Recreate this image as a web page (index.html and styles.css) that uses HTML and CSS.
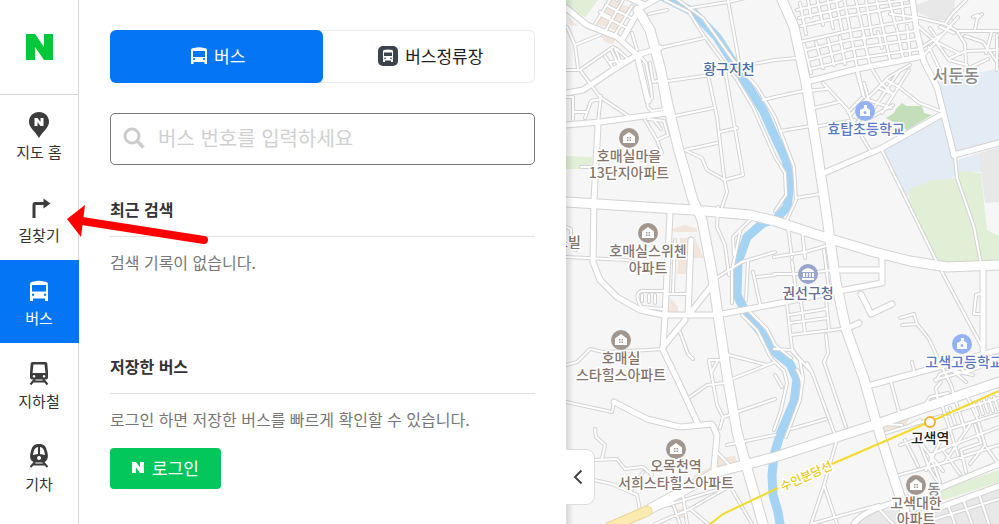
FILE: index.html
```
<!DOCTYPE html>
<html lang="ko">
<head>
    <meta charset="UTF-8">
    <meta name="viewport" content="width=device-width, initial-scale=1.0">
    <title>버스 - 지도</title>
    <link rel="stylesheet" href="styles.css">
</head>
<body>
    <div class="app">
        <nav class="sidebar">
            <a class="logo" href="#" aria-label="N">
                <svg width="27" height="26" viewBox="0 0 27 26"><path fill="#03c83c" d="M0 0h9l9 13V0H27v26h-9l-9-13v13H0z"/></svg>
            </a>
            <a class="nav-item" href="#">
                <svg width="28" height="28" viewBox="0 0 28 28"><path fill="#3c3c3c" d="M14 1C8.200 1 4 5.300 4 10.700c0 6.100 6.300 9.500 10 16.300 3.700-6.800 10-10.200 10-16.300C24 5.300 19.800 1 14 1z"/><path fill="#fff" d="M9.500 7h3l3 4V7h3v8h-3l-3-4v4h-3z"/></svg>
                <span>지도 홈</span>
            </a>
            <a class="nav-item" href="#">
                <svg width="28" height="28" viewBox="0 0 28 28"><path fill="none" stroke="#3c3c3c" stroke-width="3" d="M9 24V11q0-1.500 1.500-1.500H19"/><path fill="#3c3c3c" d="M18.500 4.500l7 5-7 5z"/></svg>
                <span>길찾기</span>
            </a>
            <a class="nav-item active" href="#">
                <svg width="28" height="28" viewBox="0 0 28 28"><path fill="#fff" fill-rule="evenodd" d="M9 4.500Q14 3 19 4.500q4 .200 4 2.500v17h-3v-2.500H8V24H5V7q0-2.300 4-2.500zM7 8v6.500h14V8zM8 16.500a1.200 1.200 0 1 0 .1 0zm12 0a1.200 1.200 0 1 0 .1 0z"/></svg>
                <span>버스</span>
            </a>
            <a class="nav-item" href="#">
                <svg width="28" height="28" viewBox="0 0 28 28"><path fill="#3c3c3c" fill-rule="evenodd" d="M7.500 2h13q1.500 0 1.800 1.500L23 12v5q0 2.500-2.500 2.500h-13Q5 19.500 5 17v-5l.700-8.500Q6 2 7.500 2zM8.500 4.500L7.500 13h13l-1-8.500zM9 15a1.300 1.300 0 1 0 .1 0zm10 0a1.300 1.300 0 1 0 .1 0z"/><path fill="none" stroke="#3c3c3c" stroke-width="2" d="M10 19l-4.500 5.500M18 19l4.500 5.500M8 21.500h12"/></svg>
                <span>지하철</span>
            </a>
            <a class="nav-item" href="#">
                <svg width="28" height="28" viewBox="0 0 28 28"><path fill="#3c3c3c" fill-rule="evenodd" d="M14 1c5 0 7 2.500 8 7 1.500 5 1 8-1 10q-1.500 1.500-4 1.500h-6q-2.500 0-4-1.500c-2-2-2.500-5-1-10 1-4.500 3-7 8-7zM13 4q-3.500.500-4.300 4.500L8 12l5-1zm2 0v7l5 1-.700-3.500Q18.500 4.500 15 4zM14 13a2 2 0 1 0 .1 0z"/><path fill="none" stroke="#3c3c3c" stroke-width="2" d="M10 19l-4.500 5M18 19l4.500 5M8 21.500h12"/></svg>
                <span>기차</span>
            </a>
        </nav>

        <main class="panel">
            <div class="tabs">
                <button class="tab active" type="button">
                    <svg width="16" height="18" viewBox="0 0 16 18"><path fill="#fff" fill-rule="evenodd" d="M3 1q5-1.500 10 0 3 0 3 2v14h-2.500v-2h-11v2H0V3q0-2 3-2zM2 4v6h12V4zm1 7a1 1 0 1 0 .1 0zm10 0a1 1 0 1 0 .1 0z"/></svg>
                    버스
                </button>
                <button class="tab" type="button">
                    <svg width="20" height="20" viewBox="0 0 20 20"><rect width="20" height="20" rx="5" fill="#3b434c"/><path fill="#fff" fill-rule="evenodd" d="M6 4q4-1 8 0 1 .300 1 1.500V16h-2v-1.500H7V16H5V5.500Q5 4.300 6 4zM6 6.500V10h8V6.500zM7 11.500a.8.800 0 1 0 .1 0zm6 0a.8.800 0 1 0 .1 0z"/></svg>
                    버스정류장
                </button>
            </div>

            <form class="search">
                <label for="busSearch" aria-label="버스 번호">
                    <svg width="22" height="22" viewBox="0 0 22 22"><circle cx="9" cy="9" r="7" fill="none" stroke="#ccc" stroke-width="3"/><path stroke="#ccc" stroke-width="3.500" d="M13.500 13.500l7 7"/></svg>
                </label>
                <input id="busSearch" type="text" placeholder="버스 번호를 입력하세요">
            </form>

            <section class="section">
                <h2>최근 검색</h2>
                <p>검색 기록이 없습니다.</p>
            </section>
            <section class="section">
                <h2>저장한 버스</h2>
                <p>로그인 하면 저장한 버스를 빠르게 확인할 수 있습니다.</p>
                <button class="login" type="button">
                    <svg width="12" height="11" viewBox="0 0 12 11"><path fill="#fff" d="M0 0h4l4 5.500V0h4v11H8L4 5.500V11H0z"/></svg>
                    로그인
                </button>
            </section>
        </main>

        <div class="map">
            <svg class="map-canvas" viewBox="566 0 433 524" preserveAspectRatio="xMinYMin slice">
                <defs>
                    <g id="wide">
                        <path d="M638 10L650 30 660 67 668 105 678 147 693 200 702 220 712 272 718 315 727 375 737 432 750 479 763 524"/>
                        <path d="M566 202L693 210 750 215 775 221 824 237 874 252 910 261 947 267 999 265"/>
                        <path d="M780 -5L794 27 806 83 817 150 827 217 831 247 836 282 846 329 864 379 877 425 891 469 904 509 907 524"/>
                        <path d="M650 509L717 472 775 457 874 425 941 402 999 382"/>
                    </g>
                    <g id="middle">
                        <path d="M806 82L857 69 919 57"/>
                        <path d="M912 -3L917 33 924 62 937 87 947 127 954 155"/>
                        <path d="M954 155L999 143"/>
                        <path d="M824 173L882 148 941 115"/>
                        <path d="M566 93L583 90 613 70 637 55 660 48"/>
                        <path d="M566 8L587 25 617 37 637 55 648 101"/>
                        <path d="M623 38L640 8 658 -2M625 -4L645 5"/>
                        <path d="M566 125L600 122 667 113"/>
                        <path d="M598 125L594 200 593 262 600 280 617 297 640 310 663 315 717 315 775 304 834 292 882 283 882 255"/>
                        <path d="M670 213L665 315 663 350 680 385 697 422"/>
                        <path d="M691 240L688 315"/>
                        <path d="M685 320L663 347M713 284L691 312"/>
                        <path d="M614 402L647 419 680 427 712 424 717 435 714 468"/>
                        <path d="M840 270L881 270M861 294L871 314 892 304M846 329L859 323"/>
                        <path d="M871 385L957 362 999 350"/>
                        <path d="M983 268L983 350"/>
                        <path d="M933 491L999 464M919 515L999 486M854 524Q858 517 875 509L907 498"/>
                    </g>
                    <g id="thin">
                        <path d="M844 -2L857 67 864 97"/>
                        <path d="M882 150L937 262M955 157L957 178 974 227 981 264"/>
                        <path d="M660 48L704 38M690 8L728 2 750 -3M728 0L741 73M753 64L775 60 797 58M763 100L775 97 808 90"/>
                        <path d="M668 81L711 75M675 116L713 108M708 75L717 117 724 177 727 192 722 207"/>
                        <path d="M725 70L733 117 743 175 725 180 707 170 702 158 685 150 717 143M720 132L737 128"/>
                        <path d="M665 0L689 12 704 36 737 80 753 107 775 157 785 173 786 195 775 211"/>
                        <path d="M674 -3L703 18 733 60 757 87 775 117 794 167 796 200 787 220M796 198L820 194"/>
                        <path d="M718 207L717 227 725 245 729 275M753 217L733 237 734 255"/>
                        <path d="M567 27L575 45 578 68M566 70L580 70 613 47M575 45L600 35M580 70L600 97 630 117M601 96L598 122M566 97H573V120M573 112H587M585 118L591 101 601 99"/>
                        <path d="M632 33L637 50M611 49L619 66M617 49L629 60M605 56L613 68M622 66L615 48M629 60L610 62"/>
                        <path d="M601 15L625 27M595 24L611 -2M606 30L623 0M616 33L632 6M606 5L631 18M600 12L610 17M617 0L622 -3"/>
                        <path d="M640 56L646 63 651 88 652 98Q643 105 652 111L664 109M650 63L653 82 661 80M659 80L664 110"/>
                        <path d="M645 120L657 140 662 153Q650 162 641 160M648 119L664 121 668 135 657 140M654 120L661 129M649 14L667 10"/>
                        <path d="M581 167H593M566 257L627 260 645 266M566 227L571 229V248L576 250"/>
                        <path d="M665 291H642Q636 292 638 300L641 307 663 309M642 295V301M649 295V302M655 295V303M665 294H690M675 240L673 292"/>
                        <path d="M680 332L688 354 693 359M713 280L742 262 775 252M725 354L767 365M732 379L775 362M737 412L775 399M727 445L775 435"/>
                        <path d="M720 360H709L717 405 723 417 720 428M709 362L713 382M718 360L711 373M723 417L735 413M690 397L707 385 724 383"/>
                        <path d="M717 452L733 469M753 272L760 304M757 277L775 275M750 312L767 329 775 345 791 358"/>
                        <path d="M742 315L757 330 771 358 784 371 787 383 781 410 774 430M775 375L782 387"/>
                        <path d="M740 232L732 270 732 303M748 262L746 300"/>
                        <path d="M566 402L612 412 614 402M566 365L577 362 590 349 603 352 648 350 663 349"/>
                        <path d="M595 429L596 437 605 445 602 459M594 460L617 459 625 469 643 467 652 475M594 480L612 484 637 495 641 515M643 472L630 492"/>
                        <path d="M683 495L687 524M652 510L710 492 730 486M655 524L690 509 708 524M672 501L680 524M690 509L730 486 752 524"/>
                        <path d="M787 305L791 340 792 349M801 302L805 333M826 299L829 329M791 335L841 329M789 315L826 309M790 323L828 318"/>
                        <path d="M774 274H797L834 270M792 262L796 290M824 250L829 290M774 257L805 252 826 246M787 220L792 258M802 228L805 258"/>
                        <path d="M774 349L791 350 812 372 834 432M826 335L828 353 824 362 846 427M791 429L826 419M812 372L807 363"/>
                        <path d="M792 349L800 360 803 378 800 400 786 437M797 370Q804 380 801 392"/>
                        <path d="M891 382L899 412M912 362L914 371M902 325L917 324 929 339 941 365M900 318L914 314 917 324"/>
                        <path d="M942 272L967 319 981 345M980 294L976 295 974 314H983"/>
                        <path d="M837 439L824 485 811 524M824 485L837 524M811 524L879 505"/>
                        <path d="M823 83L848 110 853 122 871 152M810 109L839 102M808 91L826 89M814 127L855 120M780 131L811 126"/>
                        <path d="M848 112L862 98M857 73L863 95M871 67L880 82 892 93M850 115L873 93 889 77 910 65M858 122L866 109M870 118L893 105M882 113L909 70M874 108L900 70M866 99L891 108M879 88L892 94M886 80L899 87 919 103 943 112M868 97L864 83"/>
                        <path d="M797 10L840 0M799 18L845 8 907 0M801 26L847 16 912 5M800 42L848 31 913 20M806 50L849 40 915 31M808 60L851 49 917 39M810 69L853 59 920 49"/>
                        <path d="M800 3L806 34M808 0L811 17M817 -2L823 25M827 -4L833 28M836 0L842 30M804 44L811 73M816 42L823 68M828 39L834 65M840 37L845 64"/>
                        <path d="M856 0L865 40M866 0L872 36M876 -2L890 60M889 0L896 27M901 -2L904 20M863 36L870 65M878 32L882 48M897 29L903 58M907 26L910 55"/>
                        <path d="M890 14L920 18 945 24 957 31H999M968 -2L952 14 945 24M958 17L936 42 924 55M919 27L936 42 949 60 967 65M919 49L942 34M930 28L938 40M957 31L965 44 966 64M965 36L983 42 997 62M992 31L986 53M975 29L978 15 973 17M978 18L982 14M950 58L966 51 999 50M954 33L940 27M936 42L960 54M929 47L940 70M997 35V70M965 70L988 59"/>
                        <path d="M941 365L951 385 957 405 965 430M955 360L965 373 983 366M936 381L940 374 965 367M941 382L936 388 938 402M948 366L966 382M954 371L973 375M935 380L970 370"/>
                        <path d="M925 405L930 397 948 393M941 402L950 430 958 455M968 398L978 420 985 445 999 465M886 433L925 421 999 398M905 440L918 466M916 434L930 470 940 485M900 445L940 432 999 414M940 450L999 427M899 475L940 464 999 445M918 440L943 471M942 438L926 470M945 462L970 425M960 474L943 450M966 472L961 450 981 443 975 425M940 482L930 455 955 444M985 445L970 464"/>
                        <path d="M950 408L955 424M974 404L978 415M979 402L983 414M984 400L988 412M989 399L993 411M994 397L998 409M883 424L902 425M907 427L920 420"/>
                        <path d="M948 505L955 524M963 499L972 524M979 494L989 524M935 519L999 499M880 510L893 524"/>
                    </g>
                    <g id="house">
                        <circle r="10" fill="#a2978e"/>
                        <path fill="#fff" d="M0-6l6 4.500V5H-6v-6.500z"/>
                        <path fill="#a2978e" d="M-2-1h1.500v1.500H-2zm2.500 0H2v1.500H.500zM-2 1.500h1.500V3H-2zm2.500 0H2V3H.500z"/>
                    </g>
                    <g id="school">
                        <circle r="10" fill="#94b1f5"/>
                        <path fill="#fff" d="M-1-6h3v3l3 2v6H-5v-6l4-2z"/>
                        <circle cy="1.500" r="1.500" fill="#94b1f5"/>
                    </g>
                </defs>

                <!-- land use -->
                <path class="park" d="M566 -1H599L585 17 566 8zM566 156L592 157V163L580 169H566z"/>
                <path class="campus" d="M937 83L974 74 999 68V143L954 153zM882 150L941 118 957 160 999 147V172H965L907 197z"/>
                <path class="park" d="M909 200V189L934 180 956 178 959 171 981 173 984 203 987 230 999 236V262H937zM941 490L999 470V482L941 501zM955 262H970V264z"/>
                <path class="wood" d="M886 118L894 113 896 109 902 103 906 106 922 106 924 113 932 115 907 130 897 124z"/>
                <path class="block" d="M979 153L999 148V202L985 203zM915 5L933 -1H955L953 20H935L917 12zM925 510L999 484V524H856Q860 514 880 510z"/>
                <path class="built" d="M601 15L611 -1 622 3 606 27 595 24zM618 3L633 8 618 32 609 28zM600 35L617 37 613 44 605 42zM568 17L578 26 571 25zM672 229L685 225 697 229 697 232H674zM680 238H690L686 274H677zM695 239L704 258H693zM670 298L678 307V312H669zM716 458L735 456 738 465 717 470zM694 475L716 465V473L693 484zM675 509H685V518H678zM883 425L902 413 913 413 904 428 884 433z"/>

                <path class="river" d="M660 -5L693 12 717 37 740 73 763 110 775 137 786 160 790 183 787 207 776 219 763 223 747 237 738 262 737 295 747 315 763 335 775 352 790 364 797 379 794 402 781 432 774 455 772 475 773 495 778 512 781 530"/>

                <!-- every road is drawn twice, grey edge below and white on top -->
                <use href="#thin" class="road thin edge"/>
                <use href="#middle" class="road middle edge"/>
                <use href="#wide" class="road wide edge"/>
                <use href="#thin" class="road thin"/>
                <use href="#middle" class="road middle"/>
                <use href="#wide" class="road wide"/>

                <path class="highway edge" d="M610 527L647 511"/>
                <path class="highway" d="M610 527L647 511"/>
                <path class="rail" d="M705 528L723 514 778 488M832 464L927 423 999 391"/>
                <circle class="station" cx="930" cy="422" r="5"/>

                <use href="#house" x="629" y="138"/>
                <use href="#house" x="648" y="233"/>
                <use href="#house" x="621" y="340"/>
                <use href="#house" x="676" y="449"/>
                <use href="#school" x="865" y="111"/>
                <use href="#school" x="962" y="344"/>
                <circle cx="808" cy="274" r="10" fill="#98a5cc"/>
                <path fill="#fff" d="M802 271q6-6 12 0v1h-12zM803 273h2v4h-2zm3.300 0h1.500v4h-1.500zm3 0h1.500v4h-1.500zm2.700 0h2v4h-2zM802 278h12v2h-12z"/>

                <g class="label">
                    <text x="729" y="74" class="water">황구지천</text>
                    <text x="956" y="82" class="district">서둔동</text>
                    <text x="934" y="494" class="district small">동</text>
                    <use href="#house" x="916" y="485"/>
                    <text x="866" y="134" class="edu">효탑초등학교</text>
                    <text x="964" y="367" class="edu">고색고등학교</text>
                    <text x="629" y="161">호매실마을</text>
                    <text x="629" y="178">13단지아파트</text>
                    <text x="568" y="247">스빌</text>
                    <text x="648" y="256">호매실스위첸</text>
                    <text x="648" y="273">아파트</text>
                    <text x="621" y="363">호매실</text>
                    <text x="621" y="380">스타힐스아파트</text>
                    <text x="676" y="471">오목천역</text>
                    <text x="676" y="488">서희스타힐스아파트</text>
                    <text x="916" y="508">고색대한</text>
                    <text x="916" y="524">아파트</text>
                    <text x="808" y="298" class="office">권선구청</text>
                    <text x="930" y="443" class="stop">고색역</text>
                    <text class="line" transform="translate(808 480) rotate(-24)">수인분당선</text>
                </g>
            </svg>
            <button class="fold" type="button" aria-label="패널 접기">
                <svg width="10" height="16" viewBox="0 0 10 16"><path fill="none" stroke="#444" stroke-width="2" d="M8.500 1.500L2 8l6.500 6.500"/></svg>
            </button>
        </div>

        <svg class="pointer" width="144" height="42" viewBox="0 0 144 42"><path fill="#f00" d="M1 16L19 2 15 34z"/><path stroke="#f00" stroke-width="8" stroke-linecap="round" d="M16 18L138 37"/></svg>
    </div>
</body>
</html>
```

FILE: styles.css
```
* { margin: 0; padding: 0; box-sizing: border-box; }

body {
    font-family: "Noto Sans CJK KR", sans-serif;
    font-size: 16px;
    color: #333;
    background: #fff;
}

button, input {
    font-family: inherit;
}

a {
    color: inherit;
    text-decoration: none;
}

svg {
    display: block;
    flex-shrink: 0;
}

.app {
    position: relative;
    display: flex;
    height: 100vh;
    min-height: 510px;
    overflow: hidden;
}

/* sidebar */
.sidebar {
    flex: 0 0 79px;
    border-right: 1px solid #d5d5d5;
}

.logo {
    display: flex;
    align-items: center;
    justify-content: center;
    height: 94px;
    box-shadow: 0 1px 0 #d5d5d5;
}

.nav-item {
    display: flex;
    flex-direction: column;
    align-items: center;
    gap: 1px;
    height: 83px;
    padding-top: 17px;
    font-size: 15px;
    line-height: 24px;
}

.nav-item.active {
    margin-right: -1px;
    padding-right: 1px;
    background: #0475f4;
    color: #fff;
}

/* search panel */
.panel {
    flex: 0 0 487px;
    padding: 30px 31px;
}

.tabs {
    display: flex;
    height: 53px;
    border-radius: 6px;
    box-shadow: inset 0 0 0 1px #ebebeb;
}

.tab {
    display: flex;
    flex: 1;
    align-items: center;
    justify-content: center;
    gap: 7px;
    padding: 0 0 2px 4px;
    border: none;
    border-radius: 6px;
    background: none;
    color: #222;
    font-size: 17px;
    cursor: pointer;
}

.tab.active {
    background: #0475f4;
    color: #fff;
}

.search {
    display: flex;
    align-items: center;
    gap: 13px;
    height: 52px;
    margin-top: 30px;
    padding: 0 12px 2px;
    border: 1px solid #777;
    border-radius: 5px;
}

.search input {
    flex: 1;
    min-width: 0;
    border: none;
    outline: none;
    background: none;
    font-size: 20px;
    line-height: 28px;
}

.search input::placeholder {
    color: #d0d0d0;
}

.section {
    margin-top: 32px;
}

.section + .section {
    margin-top: 80px;
}

.section h2 {
    padding-bottom: 15px;
    border-bottom: 1px solid #e1e1e1;
    font-size: 16px;
    line-height: 24px;
}

.section p {
    margin-top: 13px;
    color: #777;
    line-height: 24px;
}

.login {
    display: flex;
    align-items: center;
    gap: 8px;
    height: 41px;
    margin-top: 17px;
    padding: 0 22px 2px;
    border: none;
    border-radius: 4px;
    background: #03c75a;
    color: #fff;
    font-size: 17px;
    cursor: pointer;
}

/* map */
.map {
    position: relative;
    flex: 1;
    min-width: 0;
    background: #f6f6f6;
}

.map::after {
    content: "";
    position: absolute;
    top: 0;
    bottom: 0;
    left: 0;
    width: 8px;
    background: linear-gradient(90deg, rgba(0,0,0,0.12), rgba(0,0,0,0));
}

.map-canvas {
    width: 100%;
    height: 100%;
}

.park { fill: #e1efd6; }
.wood { fill: #c2dfb9; }
.campus { fill: #e3ebf4; }
.block { fill: #e8e8e8; }
.built { fill: #f2e6dc; }

.river {
    fill: none;
    stroke: #a5d3f3;
    stroke-width: 9px;
    stroke-linejoin: round;
}

.road {
    fill: none;
    stroke: #fff;
    stroke-linecap: round;
    stroke-linejoin: round;
}

.road.edge { stroke: #d3d3d3; }
.wide { stroke-width: 9px; }
.wide.edge { stroke-width: 11px; }
.middle { stroke-width: 5px; }
.middle.edge { stroke-width: 7px; }
.thin { stroke-width: 2px; }
.thin.edge { stroke-width: 4px; }

.highway {
    stroke: #fbebb0;
    stroke-width: 9px;
    stroke-linecap: round;
}

.highway.edge {
    stroke: #e6d48f;
    stroke-width: 11px;
}

.rail {
    fill: none;
    stroke: #f5da2a;
    stroke-width: 2px;
}

.station {
    fill: #fff;
    stroke: #f2b32f;
    stroke-width: 2px;
}

.label text {
    fill: #84746a;
    stroke: #fff;
    stroke-width: 3px;
    stroke-linejoin: round;
    paint-order: stroke;
    font-size: 14px;
    font-weight: 500;
    text-anchor: middle;
}

.label .water { fill: #476ea8; }
.label .edu { fill: #5877c4; }
.label .office { fill: #626e94; }
.label .district { fill: #8b8b8b; font-size: 17px; }
.label .district.small { font-size: 14px; }
.label .stop { fill: #222; }
.label .line { fill: #ecc915; font-size: 12px; }

.fold {
    position: absolute;
    z-index: 1;
    left: 0;
    bottom: 19px;
    display: flex;
    align-items: center;
    justify-content: center;
    width: 29px;
    height: 56px;
    padding-right: 4px;
    border: 1px solid #ddd;
    border-left: none;
    border-radius: 0 9px 9px 0;
    background: #fff;
    cursor: pointer;
}

.pointer {
    position: absolute;
    top: 203px;
    left: 66px;
}
```
